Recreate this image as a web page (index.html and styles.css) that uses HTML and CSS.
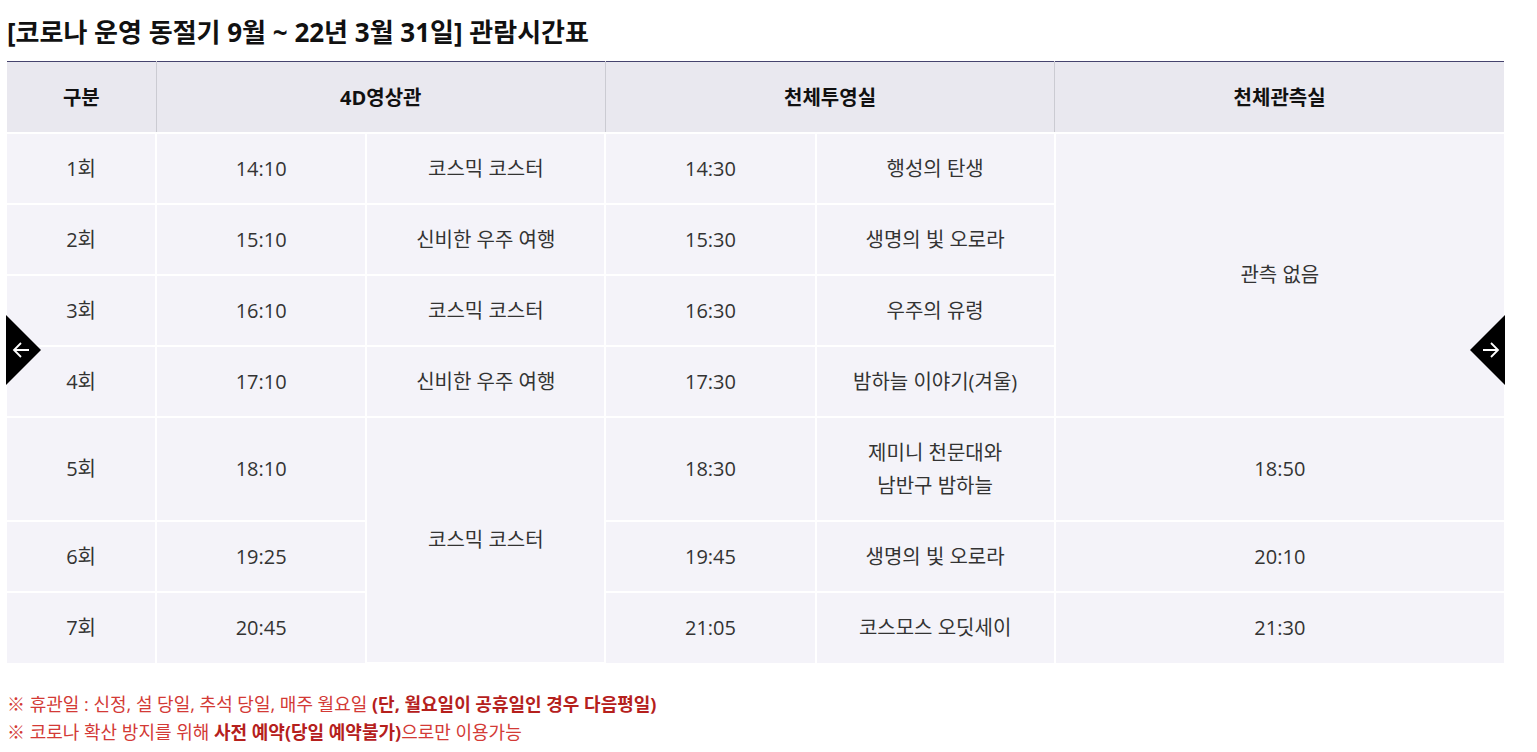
FILE: index.html
```html
<!DOCTYPE html>
<html lang="ko">
<head>
    <meta charset="UTF-8">
    <meta name="viewport" content="width=device-width, initial-scale=1.0">
    <title>관람시간표</title>
    <link rel="stylesheet" href="styles.css">
</head>
<body>
    <div class="schedule">
        <h2 class="schedule-title">[코로나 운영 동절기 9월 ~ 22년 3월 31일] 관람시간표</h2>

        <div class="table-wrap">
            <table class="time-table">
                <colgroup>
                    <col class="c-round">
                    <col class="c-time">
                    <col class="c-name">
                    <col class="c-time">
                    <col class="c-name">
                    <col class="c-obs">
                </colgroup>
                <thead>
                    <tr>
                        <th>구분</th>
                        <th colspan="2">4D영상관</th>
                        <th colspan="2">천체투영실</th>
                        <th>천체관측실</th>
                    </tr>
                </thead>
                <tbody>
                    <tr>
                        <td>1회</td>
                        <td>14:10</td>
                        <td>코스믹 코스터</td>
                        <td>14:30</td>
                        <td>행성의 탄생</td>
                        <td rowspan="4">관측 없음</td>
                    </tr>
                    <tr>
                        <td>2회</td>
                        <td>15:10</td>
                        <td>신비한 우주 여행</td>
                        <td>15:30</td>
                        <td>생명의 빛 오로라</td>
                    </tr>
                    <tr>
                        <td>3회</td>
                        <td>16:10</td>
                        <td>코스믹 코스터</td>
                        <td>16:30</td>
                        <td>우주의 유령</td>
                    </tr>
                    <tr>
                        <td>4회</td>
                        <td>17:10</td>
                        <td>신비한 우주 여행</td>
                        <td>17:30</td>
                        <td>밤하늘 이야기(겨울)</td>
                    </tr>
                    <tr class="tall">
                        <td>5회</td>
                        <td>18:10</td>
                        <td rowspan="3">코스믹 코스터</td>
                        <td>18:30</td>
                        <td>제미니 천문대와<br>남반구 밤하늘</td>
                        <td>18:50</td>
                    </tr>
                    <tr>
                        <td>6회</td>
                        <td>19:25</td>
                        <td>19:45</td>
                        <td>생명의 빛 오로라</td>
                        <td>20:10</td>
                    </tr>
                    <tr>
                        <td>7회</td>
                        <td>20:45</td>
                        <td>21:05</td>
                        <td>코스모스 오딧세이</td>
                        <td>21:30</td>
                    </tr>
                </tbody>
            </table>

            <button class="nav-btn prev" aria-label="이전">
                <svg width="20" height="20" viewBox="0 0 20 20"><path d="M18 10H3M10 3l-7 7 7 7" fill="none" stroke="#fff" stroke-width="1.8"/></svg>
            </button>
            <button class="nav-btn next" aria-label="다음">
                <svg width="20" height="20" viewBox="0 0 20 20"><path d="M2 10h15M10 3l7 7-7 7" fill="none" stroke="#fff" stroke-width="1.8"/></svg>
            </button>
        </div>

        <ul class="notes">
            <li>※ 휴관일 : 신정, 설 당일, 추석 당일, 매주 월요일 <strong>(단, 월요일이 공휴일인 경우 다음평일)</strong></li>
            <li>※ 코로나 확산 방지를 위해 <strong>사전 예약(당일 예약불가)</strong>으로만 이용가능</li>
        </ul>
    </div>
</body>
</html>
```

FILE: styles.css
```css
* {
    margin: 0;
    padding: 0;
    box-sizing: border-box;
}

body {
    font-family: "Open Sans", "Noto Sans CJK KR", sans-serif;
    background: #fff;
    color: #333;
}

.schedule {
    padding: 14px 0 0 7px;
    width: 1504px;
}

.schedule-title {
    font-size: 26px;
    font-weight: 700;
    color: #111;
    line-height: 36px;
    margin-bottom: 11px;
}

.table-wrap {
    position: relative;
}

.time-table {
    width: 1497px;
    border-collapse: collapse;
    table-layout: fixed;
    border-top: 1px solid #46446e;
}

.c-round { width: 149px; }
.c-time { width: 210px; }
.c-name { width: 239px; }
.c-obs { width: 449px; }

.time-table th {
    height: 71px;
    background: #e9e8ef;
    font-size: 20px;
    font-weight: 700;
    color: #111;
    border-left: 1px solid #cbcbd2;
    border-bottom: 2px solid #fff;
}

.time-table th:first-child {
    border-left: none;
}

.time-table td {
    height: 71px;
    background: #f4f3f9;
    border: 2px solid #fff;
    text-align: center;
    font-size: 20px;
    line-height: 33px;
    color: #333;
}

.time-table tr td:first-child {
    border-left: none;
}

.time-table tr td:last-child {
    border-right: none;
}

.time-table tbody tr:last-child td {
    border-bottom: none;
}

.time-table tr.tall td {
    height: 104px;
}

.nav-btn {
    position: absolute;
    top: 254px;
    width: 35px;
    height: 70px;
    border: none;
    background: #000;
    display: flex;
    align-items: center;
    cursor: pointer;
}

.nav-btn.prev {
    left: -1px;
    clip-path: polygon(0 0, 100% 50%, 0 100%);
    justify-content: flex-start;
    padding-left: 5px;
}

.nav-btn.next {
    right: -1px;
    clip-path: polygon(100% 0, 0 50%, 100% 100%);
    justify-content: flex-end;
    padding-right: 4px;
}

.notes {
    list-style: none;
    margin-top: 26px;
}

.notes li {
    font-size: 18px;
    line-height: 28px;
    color: #d33a36;
}

.notes strong {
    color: #b5201c;
    font-weight: 700;
}
```
